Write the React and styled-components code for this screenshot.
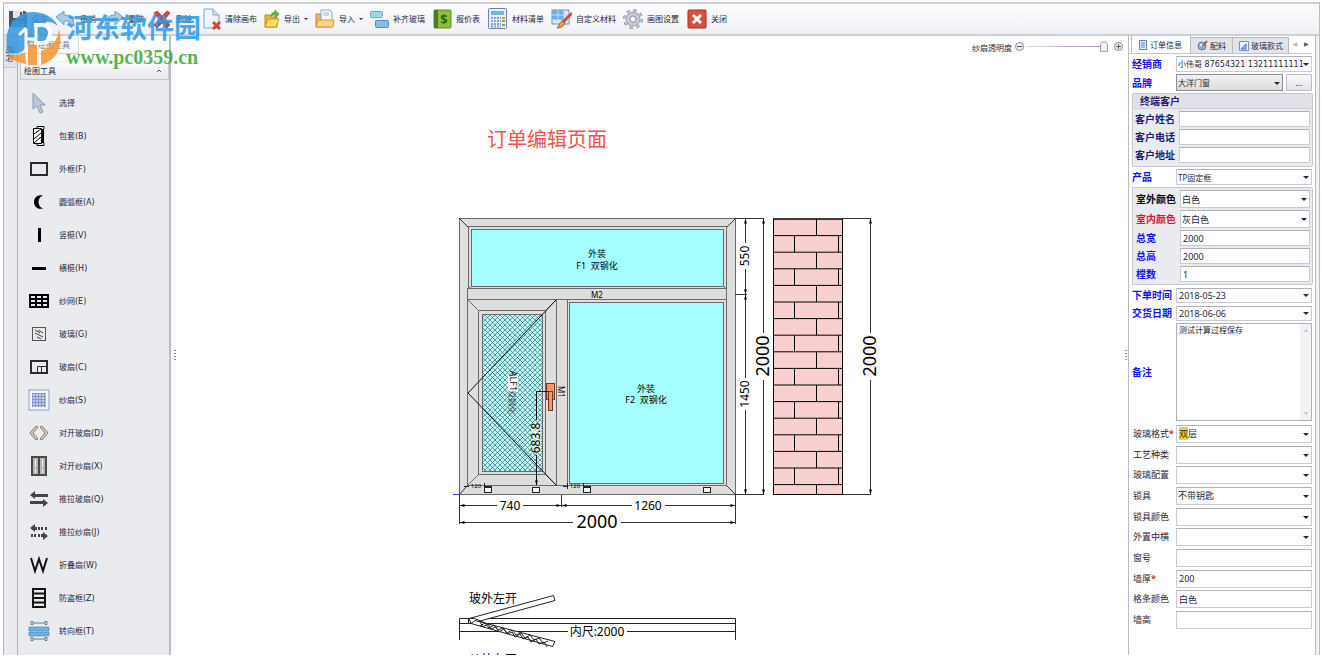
import React, { useState } from 'react';
import styled, { createGlobalStyle } from 'styled-components';

const GlobalStyle = createGlobalStyle`
  * { box-sizing: border-box; }
  body {
    margin: 0;
    background: #fff;
    color: #26263c;
    font-family: "Noto Sans", "Noto Sans CJK SC", sans-serif;
    font-size: 8px;
  }
  button, input, select, textarea { font: inherit; color: inherit; margin: 0; }
`;

const Page = styled.div`
  position: relative;
  height: 100vh;
  padding: 2px 2px 14px 3px;
`;

const Window = styled.div`
  display: flex;
  flex-direction: column;
  height: 100%;
  overflow: hidden;
  border-left: 1px solid #b4b5bb;
  border-right: 1px solid #b9bcc6;
`;

const Toolbar = styled.div`
  display: flex;
  flex: none;
  align-items: center;
  gap: 7px;
  height: 34px;
  padding-left: 4px;
  border-top: 2px solid #d0d1d6;
  border-bottom: 2px solid #cdcfd6;
  background: linear-gradient(#fdfdfe, #eff0f4);
`;

const ToolButton = styled.button`
  display: flex;
  align-items: center;
  gap: 4px;
  height: 24px;
  padding: 0;
  border: 0;
  background: none;
  white-space: nowrap;
  line-height: 12px;
  svg { flex: none; }
`;

const Caret = styled.span`
  border: 2px solid transparent;
  border-top-color: #333;
  border-bottom: 0;
`;

const Body = styled.div`
  display: flex;
  flex: 1;
  min-height: 0;
`;

const SideStrip = styled.div`
  flex: none;
  width: 14px;
  background: #eaebef;
  border-right: 1px solid #b4b5bb;
`;

const SideTab = styled.button`
  display: flex;
  align-items: center;
  justify-content: center;
  width: 13px;
  height: 32px;
  padding: 4px 0 0;
  border: 0;
  border-bottom: 1px solid #c5c6cc;
  background: #e0e1e6;
  writing-mode: vertical-rl;
  text-orientation: sideways;
`;

const ToolPanel = styled.aside`
  flex: none;
  width: 153px;
  background: #eaebef;
  border-right: 2px solid #b9bac3;
`;

const ToolTabs = styled.div`
  height: 25px;
  background: #fff;
`;

const ToolTab = styled.button`
  display: flex;
  align-items: center;
  gap: 2px;
  width: 61px;
  height: 18px;
  padding: 0 0 0 9px;
  border: 1px solid #d5d6dc;
  border-width: 0 1px 1px 0;
  background: #fafafc;
  color: #777783;
`;

const PanelHead = styled.button`
  display: flex;
  align-items: center;
  justify-content: space-between;
  width: 149px;
  height: 19px;
  margin-left: 2px;
  padding: 0 6px 0 3px;
  border: 1px solid #c6c7ce;
  border-top-color: #eee;
  background: linear-gradient(#fcfcfd, #e6e7ec);
`;

const ToolList = styled.div`
  display: flex;
  flex-direction: column;
  padding-top: 6px;
`;

const ToolItem = styled.button`
  display: flex;
  align-items: center;
  gap: 9px;
  height: 33px;
  padding: 0 0 0 10px;
  border: 0;
  background: none;
  font-family: "DejaVu Sans", "Noto Sans CJK SC", sans-serif;
  text-align: left;
  svg { flex: none; }
`;

const Splitter = styled.div`
  display: flex;
  flex: none;
  align-items: center;
  justify-content: center;
  width: ${(p) => p.$width};
  padding-top: 18px;
  color: #8c8c96;
`;

const Canvas = styled.main`
  flex: 1;
  min-width: 0;
  overflow: hidden;
`;

const CanvasBar = styled.div`
  display: flex;
  align-items: center;
  justify-content: flex-end;
  gap: 1px;
  height: 20px;
  label { margin-right: 1px; padding-top: 3px; }
`;

const RoundButton = styled.button`
  display: flex;
  padding: 0;
  border: 0;
  background: none;
`;

const Slider = styled.input`
  appearance: none;
  width: 86px;
  height: 14px;
  margin: 0;
  background: linear-gradient(90deg, #e3dcec, #a58bbd) left center / 80px 1px no-repeat;
  &::-webkit-slider-thumb {
    appearance: none;
    width: 8px;
    height: 11px;
    border: 1px solid #a3a3ab;
    border-radius: 4px 4px 1px 1px;
    background: #f0f0f3;
  }
`;

const Title = styled.h1`
  margin: 69px 0 0 308px;
  color: #f4504c;
  font-size: 20px;
  font-weight: 400;
  line-height: 30px;
  white-space: nowrap;
`;

const Drawing = styled.svg`
  display: block;
  margin: 55px 0 0 271px;
  overflow: visible;
  font-family: "Noto Sans", "Noto Sans CJK SC", sans-serif;
`;

const OrderPanel = styled.aside`
  display: flex;
  flex: none;
  flex-direction: column;
  width: 188px;
  padding-right: 3px;
  border-left: 1px solid #b9bac3;
  border-right: 1px solid #b9bac3;
`;

const Gutter = styled.div`
  flex: none;
  width: 3px;
  background: #f0f1f5;
`;

const Tabs = styled.div`
  display: flex;
  flex: none;
  align-items: flex-end;
  height: 18px;
  padding-left: 2px;
  border-bottom: 1px solid #c6c7ce;
`;

const Tab = styled.button`
  display: flex;
  align-items: center;
  gap: 2px;
  flex: none;
  width: ${(p) => p.$width};
  height: ${(p) => (p.$active ? '17px' : '16px')};
  padding: 0 0 0 6px;
  overflow: hidden;
  border: 1px solid #b9bac3;
  border-width: ${(p) => (p.$active ? '0 1px 0 1px' : '1px 1px 0 0')};
  background: ${(p) => (p.$active ? '#fff' : '#e3e4ea')};
  white-space: nowrap;
  svg { flex: none; }
`;

const TabArrow = styled.button`
  flex: 1;
  height: 16px;
  padding: 0 0 3px;
  border: 0;
  background: none;
  color: ${(p) => p.$color};
  font-family: "DejaVu Sans", sans-serif;
  font-size: 6px;
`;

const Form = styled.form`
  display: flex;
  flex: 1;
  flex-direction: column;
  gap: 2px;
  min-height: 0;
  padding: 2px 0 0 3px;
`;

const Row = styled.div`
  display: grid;
  grid-template-columns: 44px 1fr;
  align-items: center;
`;

const BrandLine = styled.div`
  display: grid;
  grid-template-columns: 1fr 26px;
  gap: 3px;
  font-size: 9px;
`;

const FieldLabel = styled.label`
  color: ${(p) => p.$color || '#1414f0'};
  font-size: 10px;
  font-weight: 700;
  line-height: 16px;
  white-space: nowrap;
`;

const PlainLabel = styled.label`
  padding-left: 1px;
  font-size: 9px;
  line-height: 16px;
  white-space: nowrap;
  b { color: #f01818; }
`;

const TextInput = styled.input`
  width: 100%;
  min-width: 0;
  height: ${(p) => p.$height || '16px'};
  padding: 0 2px;
  border: 1px solid #c9cad2;
  border-top-color: #aeb0ba;
  border-radius: 0;
  background: #fff;
  font-size: 9px;
  outline: 0;
`;

const ComboBox = styled.div`
  position: relative;
  display: flex;
  min-width: 0;
  &::after {
    content: "";
    position: absolute;
    right: 3px;
    top: calc(50% - 1px);
    border: 3px solid transparent;
    border-top-color: #26263c;
    border-bottom: 0;
    pointer-events: none;
  }
`;

const Select = styled.select`
  appearance: none;
  width: 100%;
  min-width: 0;
  height: ${(p) => p.$height || '16px'};
  padding: 0 1px;
  border: 1px solid ${(p) => (p.$raised ? '#8d8f98' : '#c9cad2')};
  border-top-color: ${(p) => (p.$raised ? '#8d8f98' : '#aeb0ba')};
  border-radius: 0;
  background: ${(p) => (p.$raised ? 'linear-gradient(#f2f2f2, #dcdcdc)' : '#fff')};
  font-size: ${(p) => p.$size || '9px'};
  outline: 0;
`;

const DealerCombo = styled.div`
  display: grid;
  min-width: 0;
  ${Select} { font-family: "DejaVu Sans", "Noto Sans CJK SC", sans-serif; }
`;

const MarkedSelect = styled.button`
  width: 100%;
  height: 18px;
  padding: 0 2px;
  border: 1px solid #c9cad2;
  border-top-color: #aeb0ba;
  background: #fff;
  font-size: 9px;
  line-height: 14px;
  text-align: left;
  mark { background: #ffd200; color: inherit; }
`;

const MoreButton = styled.button`
  height: 17px;
  padding: 0;
  border: 1px solid #b9bac3;
  border-radius: 1px;
  background: linear-gradient(#fafafb, #e2e3e9);
  line-height: 10px;
`;

const Group = styled.fieldset`
  display: flex;
  flex-direction: column;
  gap: 2px;
  min-width: 0;
  margin: 0 -1px 0 0;
  padding: ${(p) => p.$padding};
  border: 1px solid #c6c7ce;
  border-radius: 2px;
  background: #eaebef;
`;

const GroupTitle = styled.div`
  height: 15px;
  margin: 0 -2px 0 -2px;
  padding-left: 7px;
  border-bottom: 1px solid #d0d1d8;
  background: #e1e2e8;
  color: #1c1c72;
  font-size: 10px;
  font-weight: 700;
  line-height: 14px;
`;

const Remark = styled.textarea`
  display: block;
  width: 100%;
  height: 96px;
  padding: 0 2px;
  border: 0;
  background: #fff;
  font-size: 8px;
  line-height: 12px;
  resize: none;
  overflow: hidden;
  outline: 0;
`;

const RemarkBox = styled.div`
  display: grid;
  grid-template-columns: 1fr 11px;
  border: 1px solid #aeb0ba;
`;

const ScrollTrack = styled.div`
  display: flex;
  flex-direction: column;
  align-items: center;
  justify-content: space-between;
  padding: 5px 0;
  background: #f2f2f4;
  color: #c2c2c8;
`;

const Extra = styled.div`
  display: flex;
  flex: 1;
  flex-direction: column;
  justify-content: space-between;
  max-height: 206px;
  padding-top: 2px;
`;

const Watermark = styled.div`
  position: absolute;
  left: 5px;
  top: 9px;
  display: flex;
  gap: 3px;
  opacity: 0.85;
  pointer-events: none;
`;

const WatermarkName = styled.div`
  color: #2f9ae6;
  font-size: 27px;
  font-weight: 700;
  line-height: 38px;
  white-space: nowrap;
`;

const WatermarkSite = styled.div`
  color: #38a838;
  font-family: "Liberation Serif", serif;
  font-size: 20px;
  font-weight: 700;
  line-height: 20px;
`;

const icons = {
  save: (
    <svg width="20" height="20" viewBox="0 0 20 20">
      <path d="M1 2h16l2 2v14H1z" fill="#46566e" />
      <path d="M5 2h10v7H5z" fill="#dfe6ee" />
      <path d="M12 3h2v5h-2z" fill="#46566e" />
      <path d="M4 12h12v6H4z" fill="#6e94c0" />
    </svg>
  ),
  undo: (
    <svg width="21" height="20" viewBox="0 0 21 20">
      <path d="M1 8 9 2v4c6 0 10 3 10 11-2-4-5-5-10-5v4z" fill="#a8cbe6" stroke="#6d9fc6" />
    </svg>
  ),
  redo: (
    <svg width="21" height="20" viewBox="0 0 21 20">
      <path d="M20 8 12 2v4C6 6 2 9 2 17c2-4 5-5 10-5v4z" fill="#a8cbe6" stroke="#6d9fc6" />
    </svg>
  ),
  remove: (
    <svg width="21" height="20" viewBox="0 0 21 20">
      <path d="m3 4 3-2 5 5 5-5 3 2-5 6 5 6-3 3-5-5-5 5-3-3 5-6z" fill="#d8433f" stroke="#c0504c" />
    </svg>
  ),
  clear: (
    <svg width="22" height="22" viewBox="0 0 22 22">
      <path d="M5 1h9l6 6v13H5z" fill="#eef5fd" stroke="#7ea4cc" />
      <path d="M14 1v6h6" fill="#cfe0f3" stroke="#7ea4cc" />
      <path d="m14 14 7 7m0-7-7 7" stroke="#d9432f" strokeWidth="3" />
    </svg>
  ),
  exp: (
    <svg width="16" height="20" viewBox="0 0 16 20">
      <path d="M1 6h5l1 2h6v10H1z" fill="#eeb52e" stroke="#c18a17" />
      <path d="m1 18 3-8h11l-3 8z" fill="#ffdf69" stroke="#c9951f" />
      <path d="M7 7c0-3 2-4 4-4V1l4 4-4 4V6c-1 0-2 0-4 1z" fill="#61b53a" stroke="#3d8a22" strokeWidth=".5" />
    </svg>
  ),
  imp: (
    <svg width="20" height="20" viewBox="0 0 20 20">
      <path d="M1 5h5l1 2h9v11H1z" fill="#f0b94c" stroke="#c18a2c" />
      <path d="M6 1h9l2 3v9H6z" fill="#f6fafe" stroke="#8aa5c4" />
      <path d="M8 4h6M8 6h6" stroke="#9db8d6" />
      <path d="M1 18 3 11h16l-1 7z" fill="#fcd47e" stroke="#c99a3c" />
    </svg>
  ),
  fill: (
    <svg width="19" height="20" viewBox="0 0 19 20">
      <rect x=".5" y="2.5" width="12" height="6" rx="1" fill="#a5d2ee" stroke="#6fa6cd" />
      <rect x="5.5" y="11.5" width="13" height="7" rx="1" fill="#82bfe8" stroke="#4d8dbd" />
    </svg>
  ),
  quote: (
    <svg width="20" height="20" viewBox="0 0 20 20">
      <rect x="2" y="1" width="17" height="18" rx="1" fill="#8dbf3c" stroke="#5f8f25" />
      <path d="M2 1h4v18H2z" fill="#4f7a25" />
      <text x="12" y="15" fontSize="13" fontWeight="700" textAnchor="middle" fill="#355f12">$</text>
    </svg>
  ),
  list: (
    <svg width="21" height="22" viewBox="0 0 21 22">
      <rect x="1.5" y=".5" width="18" height="20" rx="1" fill="#e8f1fb" stroke="#6585b4" />
      <rect x="4" y="3" width="13" height="4" fill="#79b3e6" />
      <path d="M4 10h10M4 13h10M4 16h10M4 18.500h10" stroke="#8a9fc2" strokeWidth="2" strokeDasharray="2 1" />
      <path d="M15 10h3" stroke="#ec8a3c" strokeWidth="2" />
      <path d="M15 13h3m-3 4h3" stroke="#6cb04c" strokeWidth="2" />
    </svg>
  ),
  custom: (
    <svg width="21" height="20" viewBox="0 0 21 20">
      <rect x="1" y="1" width="17" height="14" fill="#d9e9f8" stroke="#5f93c6" />
      <path d="M1 1h12v10H1z" fill="#71aede" />
      <path d="M7 1v14M13 1v14M1 6h17M1 11h17" stroke="#c3dcf2" />
      <path d="m20 5-8 8" stroke="#d44a35" strokeWidth="3" strokeLinecap="round" />
      <path d="m12 12 2 2c-1 4-5 5-8 5 2-2 2-6 6-7z" fill="#e8a145" stroke="#53381d" strokeWidth=".6" />
    </svg>
  ),
  gear: (
    <svg width="20" height="20" viewBox="0 0 20 20">
      <circle cx="10" cy="10" r="8" fill="none" stroke="#8790a1" strokeWidth="4" strokeDasharray="3.2 3.080" />
      <circle cx="10" cy="10" r="8" fill="none" stroke="#c5cbd6" strokeWidth="2" strokeDasharray="3.2 3.080" />
      <circle cx="10" cy="10" r="7" fill="#c5cbd6" stroke="#9aa2b1" />
      <circle cx="10" cy="10" r="3" fill="#fff" stroke="#8790a1" />
    </svg>
  ),
  close: (
    <svg width="21" height="20" viewBox="0 0 21 20">
      <rect x="2" y="1" width="18" height="18" rx="1" fill="#d6503f" stroke="#a52d22" />
      <path d="m7 6 8 8m0-8-8 8" stroke="#fff" strokeWidth="3" />
    </svg>
  ),
};

const TOOLBAR = [
  ['save', '保存'], ['undo', '撤销'], ['redo', '重做'], ['remove', '删除'], ['clear', '清除画布'],
  ['exp', '导出', true], ['imp', '导入', true], ['fill', '补齐玻璃'], ['quote', '报价表'],
  ['list', '材料清单'], ['custom', '自定义材料'], ['gear', '画图设置'], ['close', '关闭'],
];

// every glyph is drawn in a 22 x 22 box
const TOOLS = [
  ['选择', <path d="M5 1v16l4-3 3 7 3-1-3-7h5z" fill="#b9c8d9" stroke="#8a9aae" />],
  ['包套(B)', <><path d="M5.500 3.500h8v15h-8z" fill="#fff" stroke="#000" /><path d="m6 9 7-5M6 14l7-6M6 18l7-6" stroke="#000" /><path d="M13 4h3v14h-3z" /><path d="M9 3V1.500h7V4M9 19v1.500h7V18" fill="none" stroke="#000" /></>],
  ['外框(F)', <rect x="3" y="5" width="16" height="12" fill="none" stroke="#2c2c2c" strokeWidth="2" />],
  ['圆弧框(A)', <path d="M15 4.500C9 3 6 7 6 11s3 8 9 6.500c-6-2-6-11 0-13z" />],
  ['竖梃(V)', <path d="M10 4h3v14h-3z" />],
  ['横梃(H)', <path d="M4 10h14v3H4z" />],
  ['纱网(E)', <path d="M2 5h18v12H2zM2 9h18M2 13h18M8 5v12M14 5v12" fill="none" stroke="#000" strokeWidth="2" />],
  ['玻璃(G)', <><rect x="4.500" y="4.500" width="13" height="13" fill="#e7e9e9" stroke="#555" /><path d="m7 7 5 3M7 10l8 4M10 7l5 3M9 14l4 2" stroke="#444" /></>],
  ['玻扇(C)', <><path d="M3 5h16v12H3z" fill="none" stroke="#2c2c2c" strokeWidth="2" /><path d="M9.500 16v-5.500H18M13.500 16v-5.500" fill="none" stroke="#2c2c2c" /></>],
  ['纱扇(S)', <><rect x="1" y="1" width="20" height="20" fill="#f4f7fd" stroke="#8f9fc6" /><path d="M4 4h14v14H4z" fill="#c3cdec" /><path d="M4 4.500h14M4 7.500h14M4 10.500h14M4 13.500h14M4 16.500h14M4.500 4v14M7.500 4v14M10.500 4v14M13.500 4v14M16.500 4v14" stroke="#8797cc" /></>],
  ['对开玻扇(D)', <path d="m8 4-6 7 6 7 2-1-5-6 5-6zM14 4l6 7-6 7-2-1 5-6-5-6z" fill="#d8cfca" stroke="#84746c" />],
  ['对开纱扇(X)', <><path d="M4 2h7v18H4zM11 2h7v18h-7z" fill="#b5b5b5" stroke="#4a4a4a" strokeWidth="2" /><path d="M7.500 4v14M14.500 4v14" stroke="#f4f4f4" strokeDasharray="8 2" /></>],
  ['推拉玻扇(Q)', <path d="M2 7l5-4v3h13v3H7v2zM20 15l-5 4v-3H2v-3h13v-2z" fill="#444" />],
  ['推拉纱扇(J)', <path d="M2 7l5-4v3h2v3H7v2zM10 6h2v3h-2zM13 6h2v3h-2zM17 6h2v3h-2zM20 15l-5 4v-3h-2v-3h2v-2zM3 13h2v3H3zM6 13h2v3H6zM10 13h2v3h-2z" fill="#444" />],
  ['折叠扇(W)', <path d="m3 4 4 13 4-12 4 12 4-13" fill="none" stroke="#111" strokeWidth="2" />],
  ['防盗框(Z)', <path d="M5 2h12v18H5zM5 6.500h12M5 11h12M5 15.500h12" fill="none" stroke="#111" strokeWidth="2" />],
  ['转向框(T)', <><path d="M1 7h20v4H1zM1 12h20v4H1z" fill="#6fb2e2" stroke="#4381ae" strokeWidth=".6" /><path d="M4 3h14M4 19h14" stroke="#5f7a96" /><path d="M3 1.500h2v3H3zM17 1.500h2v3h-2zM3 17.500h2v3H3zM17 17.500h2v3h-2z" fill="#fff" stroke="#5f7a96" /></>],
];

const Dim = ({ x, y, size = 12, rotate, children }) => (
  <text
    x={x}
    y={y}
    fontSize={size}
    textAnchor="middle"
    dominantBaseline="central"
    fill="#000"
    transform={rotate ? `rotate(${rotate} ${x} ${y})` : undefined}
  >
    {children}
  </text>
);

const Wall = () => {
  const rows = Array.from({ length: 17 }, (_, i) => 219 + i * 16.6);
  return (
    <g stroke="#000">
      <rect x="773.5" y="219" width="69" height="275.5" fill="#f9d0d0" />
      {rows.map((y, i) => {
        const end = Math.min(y + 16.6, 494.5);
        return (
          <path key={y} d={`M773 ${y}h70${i % 2 ? `M794.5 ${y}V${end}M838.5 ${y}V${end}` : `M816.5 ${y}V${end}`}`} />
        );
      })}
    </g>
  );
};

const WindowDrawing = () => (
  <Drawing width="440" height="470" viewBox="450 210 440 470">
    <defs>
      <pattern id="mesh" width="5" height="5" patternUnits="userSpaceOnUse">
        <path d="M0 0l5 5M5 0 0 5" stroke="#3f6c6e" strokeWidth=".7" />
      </pattern>
      <marker id="arrow" viewBox="0 0 6 4" refX="6" refY="2" markerWidth="5" markerHeight="3" orient="auto-start-reverse">
        <path d="M0 0l6 2-6 2z" />
      </marker>
    </defs>

    <g fill="#dedede" stroke="#6a6a6a">
      <rect x="459.5" y="218.5" width="276" height="276" />
      <path d="M459.5 218.5l9 9M735.5 218.5l-9 9M459.5 494.5l8-9M735.5 494.5l-9-9" stroke="#333" />
      <rect x="468.500" y="226.500" width="258" height="62" />
      <rect x="471.500" y="229.500" width="252" height="57" fill="#a5ffff" />
      <rect x="467.5" y="288.5" width="259" height="11" />
      <rect x="467.5" y="299.5" width="89" height="186" />
      <rect x="556.5" y="299.5" width="11" height="186" />
      <rect x="567.500" y="299.500" width="159" height="186" />
      <rect x="569.500" y="302.500" width="154" height="181" fill="#a5ffff" />
      <rect x="478.5" y="310.5" width="67" height="164" />
      <rect x="482.500" y="314.500" width="60" height="157" fill="#b9fbfb" />
      <path d="M467.5 299.5l11 11M556.5 299.5l-11 11M467.5 485.5l11-11M556.5 485.5l-11-11M723.5 286.5l3 2M471.5 286.5l-3 2" />
    </g>
    <rect x="483" y="315" width="59" height="156" fill="url(#mesh)" />

    <path d="M508 376h10v16h-10z" fill="#fff" />
    <Dim x="513" y="381" size="9" rotate="90">ALF1</Dim>
    <g opacity=".6"><Dim x="512" y="402" size="8" rotate="90">双钢化</Dim></g>
    <path d="M556.5 299.5 468 393l88.500 92.500" fill="none" stroke="#111" />
    <g fill="#ff9468" stroke="#6b3a24">
      <rect x="546.5" y="383.5" width="8" height="16" />
      <rect x="548.5" y="391.5" width="4" height="19" />
    </g>
    <path d="M548 391.500h-11.500V420" fill="none" stroke="#000" />
    <path d="M536.500 455v30" stroke="#000" markerEnd="url(#arrow)" />
    <path d="M531 423h10v30h-10z" fill="#fff" opacity=".6" />
    <Dim x="535" y="438" rotate="-90">683.8</Dim>
    <Dim x="561" y="392" size="8" rotate="90">M1</Dim>
    <Dim x="597" y="294" size="8">M2</Dim>

    <Dim x="597" y="253" size="9">外装</Dim>
    <Dim x="597" y="265" size="9">F1&#160; 双钢化</Dim>
    <Dim x="646" y="388" size="9">外装</Dim>
    <Dim x="646" y="399" size="9">F2&#160; 双钢化</Dim>

    <g fill="#f4f4f4" stroke="#222">
      <rect x="484.500" y="487.500" width="7" height="5" />
      <rect x="532.500" y="487.500" width="7" height="5" />
      <rect x="583.500" y="487.500" width="7" height="5" />
      <rect x="703.500" y="487.500" width="7" height="5" />
    </g>
    <Dim x="476" y="486" size="6">120</Dim>
    <Dim x="575" y="486" size="6">120</Dim>
    <path d="M464 486.5h5M485 486.5h7M563 486.5h5M584 486.5h7M484.500 483v6M567.500 483v6M583.500 483v6" stroke="#222" />
    <path d="M453 494.5h6.500v-7" fill="none" stroke="#4444e8" />

    <g stroke="#333">
      <path d="M459.5 495v29M735.5 495v29M561.5 495v12M735 218.5h29M735 294.5h12M735 494.5h29M843 218.5h28M843 494.5h28" />
      <path d="M497 505.5h-37" markerEnd="url(#arrow)" />
      <path d="M523 505.5h38" markerEnd="url(#arrow)" />
      <path d="M632 505.5h-70" markerEnd="url(#arrow)" />
      <path d="M665 505.5h70" markerEnd="url(#arrow)" />
      <path d="M573 522.5H460" markerEnd="url(#arrow)" />
      <path d="M621 522.5h114" markerEnd="url(#arrow)" />
      <path d="M745.5 243v-24" markerEnd="url(#arrow)" />
      <path d="M745.5 269v25" markerEnd="url(#arrow)" />
      <path d="M745.5 378v-83" markerEnd="url(#arrow)" />
      <path d="M745.5 410v84" markerEnd="url(#arrow)" />
      <path d="M763.5 333V219" markerEnd="url(#arrow)" />
      <path d="M763.5 380v114" markerEnd="url(#arrow)" />
      <path d="M870.5 333V219" markerEnd="url(#arrow)" />
      <path d="M870.5 380v114" markerEnd="url(#arrow)" />
    </g>
    <Dim x="510" y="505">740</Dim>
    <Dim x="648" y="505">1260</Dim>
    <Dim x="597" y="521" size="18">2000</Dim>
    <Dim x="744" y="256" rotate="-90">550</Dim>
    <Dim x="744" y="394" rotate="-90">1450</Dim>
    <Dim x="762" y="356" size="18" rotate="-90">2000</Dim>
    <Dim x="869" y="356" size="18" rotate="-90">2000</Dim>
    <Wall />

    <g fill="none" stroke="#222">
      <path d="M459.5 640v-21.500h276V640M459.5 623.5h276M459.500 631.500H568M627 631.500h108.500" />
      <path d="M469 618.500 553.500 595.500l1.500 5-84 23zM468.500 618.500h6l12 5h-18z" fill="#fff" />
      <path d="M471 623.500 552.500 646.500l2.500-5-80-21z" fill="#fff" />
      <path d="M480 622l3 5 5-3 3 5 5-2 3 5 5-3 3 5 5-2 3 5 5-3 3 5 5-2 3 5 5-3 3 5 5-2 3 5M480 626l5-3 4 5 5-3 4 5 5-2 4 5 5-3 4 5 5-2 4 5 5-3 4 5 5-2 4 5 5-2" />
    </g>
    <Dim x="493" y="598">玻外左开</Dim>
    <Dim x="597" y="631">内尺:2000</Dim>
    <Dim x="493" y="659">纱外左开</Dim>
  </Drawing>
);

const Combo = ({ id, value = '', height, raised, size }) => (
  <ComboBox>
    <Select id={id} $height={height} $raised={raised} $size={size}>
      <option>{value}</option>
    </Select>
  </ComboBox>
);

const Field = ({ id, label, color, plain, required, children }) => (
  <Row>
    {plain ? (
      <PlainLabel htmlFor={id}>{label}{required && <b>*</b>}</PlainLabel>
    ) : (
      <FieldLabel htmlFor={id} $color={color}>{label}</FieldLabel>
    )}
    {children}
  </Row>
);

const OrderForm = () => (
  <Form>
    <Field id="dealer" label="经销商">
      <DealerCombo><Combo id="dealer" value="小伟哥 87654321 13211111111" size="8px" /></DealerCombo>
    </Field>
    <Field id="brand" label="品牌">
      <BrandLine>
        <Combo id="brand" value="大洋门窗" height="17px" raised size="8px" />
        <MoreButton type="button">...</MoreButton>
      </BrandLine>
    </Field>

    <Group $padding="0 2px 3px 2px">
      <GroupTitle>终端客户</GroupTitle>
      {[['name', '客户姓名'], ['phone', '客户电话'], ['address', '客户地址']].map(([id, label]) => (
        <Field key={id} id={id} label={label} color="#1c1c72">
          <TextInput id={id} />
        </Field>
      ))}
    </Group>

    <Field id="product" label="产品"><Combo id="product" value="TP固定框" size="8px" /></Field>

    <Group $padding="2px 2px 2px 3px">
      <Field id="outer" label="室外颜色" color="#000"><Combo id="outer" value="白色" height="18px" /></Field>
      <Field id="inner" label="室内颜色" color="#dc143c"><Combo id="inner" value="灰白色" height="18px" /></Field>
      <Field id="width" label="总宽"><TextInput id="width" defaultValue="2000" /></Field>
      <Field id="height" label="总高"><TextInput id="height" defaultValue="2000" /></Field>
      <Field id="count" label="樘数"><TextInput id="count" defaultValue="1" /></Field>
    </Group>

    <Field id="ordered" label="下单时间">
      <ComboBox><TextInput id="ordered" $height="15px" defaultValue="2018-05-23" /></ComboBox>
    </Field>
    <Field id="delivery" label="交货日期">
      <ComboBox><TextInput id="delivery" $height="15px" defaultValue="2018-06-06" /></ComboBox>
    </Field>
    <Field id="remark" label="备注">
      <RemarkBox>
        <Remark id="remark" defaultValue="测试计算过程保存" />
        <ScrollTrack>
          <svg width="4" height="3"><path d="M0 3l2-3 2 3z" fill="currentColor" /></svg>
          <svg width="4" height="3"><path d="M0 0l2 3 2-3z" fill="currentColor" /></svg>
        </ScrollTrack>
      </RemarkBox>
    </Field>

    <Extra>
      <Field id="glass" label="玻璃格式" plain required>
        <ComboBox>
          <MarkedSelect id="glass" type="button" aria-haspopup="listbox"><mark>双</mark>层</MarkedSelect>
        </ComboBox>
      </Field>
      <Field id="craft" label="工艺种类" plain><Combo id="craft" height="18px" /></Field>
      <Field id="config" label="玻璃配置" plain><Combo id="config" height="18px" /></Field>
      <Field id="lock" label="锁具" plain><Combo id="lock" value="不带钥匙" height="18px" /></Field>
      <Field id="lockColor" label="锁具颜色" plain><Combo id="lockColor" height="18px" /></Field>
      <Field id="beam" label="外置中横" plain><Combo id="beam" height="18px" /></Field>
      <Field id="windowNo" label="窗号" plain><TextInput id="windowNo" $height="18px" /></Field>
      <Field id="wall" label="墙厚" plain required><TextInput id="wall" $height="18px" defaultValue="200" /></Field>
      <Field id="bar" label="格条颜色" plain><TextInput id="bar" $height="18px" defaultValue="白色" /></Field>
      <Field id="wallHeight" label="墙高" plain><TextInput id="wallHeight" $height="18px" /></Field>
    </Extra>
  </Form>
);

const Grip = () => (
  <svg width="3" height="10" fill="currentColor">
    <path d="M0 0h2v1H0zM0 3h2v1H0zM0 6h2v1H0zM0 9h2v1H0z" />
  </svg>
);

const App = () => {
  const [opacity, setOpacity] = useState(95);

  return (
    <>
      <GlobalStyle />
      <Page>
        <Window>
          <Toolbar>
            {TOOLBAR.map(([icon, label, menu]) => (
              <ToolButton key={icon} type="button">
                {icons[icon]}
                {label}
                {menu && <Caret />}
              </ToolButton>
            ))}
          </Toolbar>
          <Body>
            <SideStrip><SideTab type="button">结构</SideTab></SideStrip>
            <ToolPanel>
              <ToolTabs>
                <ToolTab type="button">
                  <svg width="9" height="9">
                    <circle cx="4.5" cy="4.5" r="3" fill="#dde6f2" stroke="#9fb4d0" strokeWidth="2" />
                  </svg>
                  绘图工具
                </ToolTab>
              </ToolTabs>
              <PanelHead type="button">
                绘图工具
                <svg width="6" height="4"><path d="M1 3l2-2 2 2" fill="none" stroke="#555" /></svg>
              </PanelHead>
              <ToolList>
                {TOOLS.map(([label, glyph]) => (
                  <ToolItem key={label} type="button">
                    <svg width="22" height="22" viewBox="0 0 22 22">{glyph}</svg>
                    {label}
                  </ToolItem>
                ))}
              </ToolList>
            </ToolPanel>
            <Splitter $width="8px"><Grip /></Splitter>
            <Canvas>
              <CanvasBar>
                <label htmlFor="opacity">纱扇透明度</label>
                <RoundButton type="button" aria-label="-">
                  <svg width="11" height="11"><circle cx="5.5" cy="5.5" r="4" fill="#f2f2f4" stroke="#888" /><path d="M3 5.500h5" stroke="#555" /></svg>
                </RoundButton>
                <Slider
                  id="opacity"
                  type="range"
                  value={opacity}
                  onChange={(e) => setOpacity(Number(e.target.value))}
                />
                <RoundButton type="button" aria-label="+">
                  <svg width="11" height="11"><circle cx="5.5" cy="5.5" r="4" fill="#f2f2f4" stroke="#888" /><path d="M3 5.500h5M5.500 3v5" stroke="#555" /></svg>
                </RoundButton>
              </CanvasBar>
              <Title>订单编辑页面</Title>
              <WindowDrawing />
            </Canvas>
            <Splitter $width="4px"><Grip /></Splitter>
            <OrderPanel>
              <Tabs>
                <Tab type="button" $active $width="60px">
                  <svg width="10" height="10"><path d="M1.500.5h7v9h-7z" fill="#e6effa" stroke="#5b83bd" /><path d="M3 3h4M3 5h4M3 7h4" stroke="#5b83bd" /></svg>
                  订单信息
                </Tab>
                <Tab type="button" $width="42px">
                  <svg width="11" height="11"><circle cx="5" cy="6" r="4" fill="#8fb8e0" stroke="#4f7db0" /><circle cx="4" cy="5" r="1" fill="#fff" /><circle cx="5" cy="8" r="1" fill="#e48a35" /><path d="m6 6 4-5" stroke="#c6502f" strokeWidth="2" /></svg>
                  配料
                </Tab>
                <Tab type="button" $width="56px">
                  <svg width="10" height="10"><path d="M.5.5h9v9h-9z" fill="#e6effa" stroke="#7a8fc0" /><path d="M2 8l5-5v5z" fill="#9ec3ea" stroke="#4c6fb0" /></svg>
                  玻璃款式
                </Tab>
                <TabArrow type="button" $color="#b9bac3" aria-label="上一页">◀</TabArrow>
                <TabArrow type="button" $color="#555" aria-label="下一页">▶</TabArrow>
              </Tabs>
              <OrderForm />
            </OrderPanel>
            <Gutter />
          </Body>
        </Window>
        <Watermark>
          <svg width="58" height="58" viewBox="0 0 58 58">
            <path d="M3 43C-3 20 10 3 28 3c11 0 20 5 25 14-5-4-9-5-14-4l5 8-4 12-9 2-4-6-9 13c-5 3-10 4-15 1z" fill="#3596dc" />
            <path d="M3 45c6 2 12 1 17-2l1 12C13 54 7 51 3 45z" fill="#f59432" />
            <path d="M23 36l9-2v22h-9z" fill="#f59432" />
            <path d="M54 20c5 18-3 32-18 36V42c11-4 17-11 18-22z" fill="#f59432" />
            <path d="M29 16h8c11 0 11 18 0 18h-8" fill="none" stroke="#fff" strokeWidth="4" />
            <path d="M21 20v20M21 30h11M14 26l7-7M31 15v21" fill="none" stroke="#fff" strokeWidth="3" />
          </svg>
          <div>
            <WatermarkName>河东软件园</WatermarkName>
            <WatermarkSite>www.pc0359.cn</WatermarkSite>
          </div>
        </Watermark>
      </Page>
    </>
  );
};

export default App;
